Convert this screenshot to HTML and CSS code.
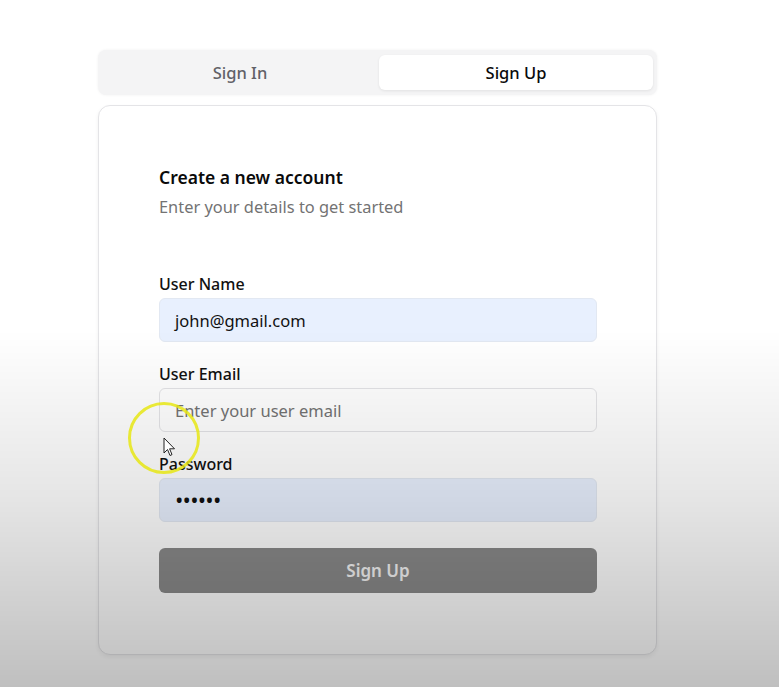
FILE: index.html
```html
<!DOCTYPE html>
<html lang="en">
<head>
<meta charset="utf-8">
<title>Sign Up</title>
<link rel="stylesheet" href="styles.css">
</head>
<body>
<main class="page">
  <div class="auth">
    <div class="tabs">
      <button class="tab">Sign In</button>
      <button class="tab tab-active">Sign Up</button>
    </div>
    <section class="card">
      <h1 class="title">Create a new account</h1>
      <p class="subtitle">Enter your details to get started</p>
      <form class="form">
        <div class="field">
          <label class="label">User Name</label>
          <div class="input input-filled">john@gmail.com</div>
        </div>
        <div class="field">
          <label class="label">User Email</label>
          <div class="input input-empty">Enter your user email</div>
        </div>
        <div class="field">
          <label class="label">Password</label>
          <div class="input input-filled input-pass">••••••</div>
        </div>
        <button type="button" class="submit">Sign Up</button>
      </form>
    </section>
  </div>
</main>
<div class="shade"></div>
<div class="cursor-ring"></div>
<svg class="cursor" width="14" height="20" viewBox="0 0 14 20"><path d="M1 1 L1 16 L4.5 12.5 L7 18.5 L9 17.6 L6.6 11.8 L11.5 11.8 Z" fill="#fff" stroke="#222" stroke-width="1" stroke-linejoin="round"/></svg>
</body>
</html>
```
FILE: styles.css
```css
* { box-sizing: border-box; }
html, body { margin: 0; padding: 0; }
body {
  background: #ffffff;
  font-family: "Noto Sans", "Open Sans", sans-serif;
  color: #111;
  width: 779px;
  height: 687px;
  overflow: hidden;
}
.page {
  padding-top: 50px;
  padding-left: 98px;
}
.auth {
  width: 559px;
  display: flex;
  flex-direction: column;
  gap: 10px;
}
.tabs {
  display: grid;
  grid-template-columns: 1fr 1fr;
  gap: 2px;
  height: 45px;
  padding: 5px 4px 5px 5px;
  background: #f4f4f5;
  border-radius: 8px;
  box-shadow: 0 0 3px rgba(0,0,0,0.06);
}
.tab {
  border: 0;
  background: transparent;
  font-family: inherit;
  font-size: 16.5px;
  font-weight: 500;
  color: #616167;
  border-radius: 6px;
  cursor: pointer;
  padding: 0;
}
.tab-active {
  background: #fff;
  color: #0a0a0a;
  box-shadow: 0 1px 3px rgba(0,0,0,0.08);
}
.card {
  height: 550px;
  background: #fff;
  border: 1px solid #e4e4e7;
  border-radius: 12px;
  box-shadow: 0 2px 4px rgba(0,0,0,0.06);
  padding: 58px 59px 0 60px;
}
.title {
  margin: 0;
  font-size: 17.5px;
  font-weight: 600;
  line-height: 26px;
  color: #0a0a0a;
}
.subtitle {
  margin: 5px 0 0 0;
  font-size: 16.4px;
  line-height: 24px;
  color: #737373;
}
.form {
  margin-top: 54px;
  display: flex;
  flex-direction: column;
  gap: 21px;
}
.field {
  display: flex;
  flex-direction: column;
  gap: 3px;
}
.label {
  font-size: 16px;
  font-weight: 500;
  line-height: 22px;
  color: #111;
}
.input {
  height: 44px;
  border-radius: 6px;
  border: 1px solid #e4e4e7;
  padding: 0 15px;
  display: flex;
  align-items: center;
  font-size: 16.5px;
  color: #111;
}
.input-filled {
  background: #e8f0fe;
  border-color: #e2e8f2;
}
.input-empty {
  background: #fff;
  color: #737373;
}
.input-pass {
  font-size: 17px;
  font-weight: 700;
  letter-spacing: 1.2px;
  padding-left: 16px;
}
.submit {
  margin-top: 5px;
  height: 45px;
  border: 0;
  border-radius: 6px;
  background: #8a8a8a;
  color: #f6f6f6;
  font-family: inherit;
  font-size: 17px;
  font-weight: 600;
}
.shade {
  position: fixed;
  inset: 0;
  pointer-events: none;
  background: linear-gradient(to bottom, rgba(0,0,0,0) 0, rgba(0,0,0,0) 330px, rgba(0,0,0,0.1) 500px, rgba(0,0,0,0.25) 687px);
}
.cursor-ring {
  position: fixed;
  left: 128px;
  top: 402px;
  width: 72px;
  height: 72px;
  border-radius: 50%;
  border: 3px solid rgba(230, 230, 20, 0.85);
  pointer-events: none;
}
.cursor {
  position: fixed;
  left: 163px;
  top: 437px;
}
```
